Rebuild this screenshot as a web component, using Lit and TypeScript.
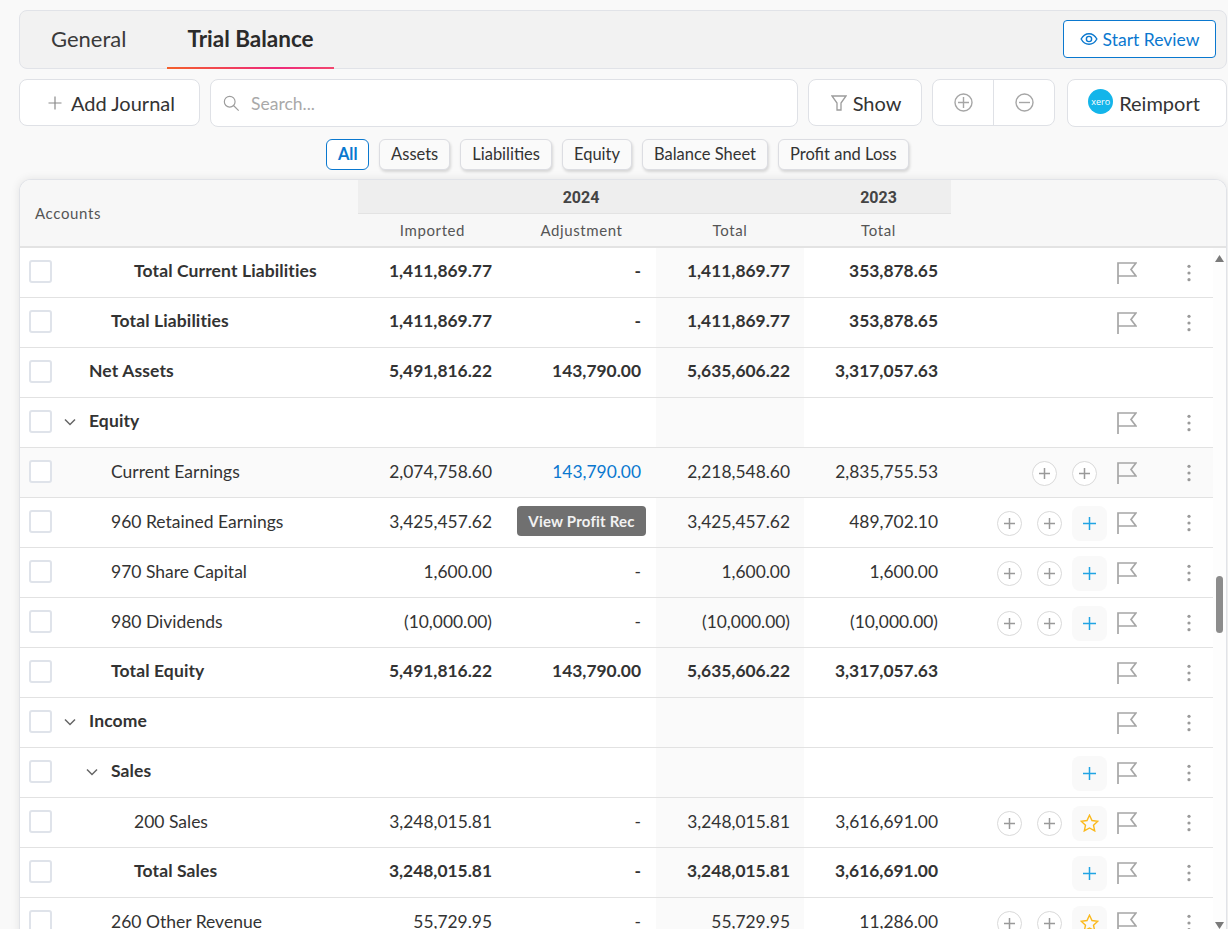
import { LitElement, html, css, svg, nothing } from "lit";
import { customElement } from "lit/decorators.js";

type Row = {
  label: string;
  level: 0 | 1 | 2;
  bold?: boolean;
  chevron?: boolean;
  vals?: [string, string, string, string];
  acts?: string;
  shade?: boolean;
  link?: boolean;
  tip?: boolean;
};

const rows: Row[] = [
  { label: "Total Current Liabilities", level: 2, bold: true, vals: ["1,411,869.77", "-", "1,411,869.77", "353,878.65"], acts: "f" },
  { label: "Total Liabilities", level: 1, bold: true, vals: ["1,411,869.77", "-", "1,411,869.77", "353,878.65"], acts: "f" },
  { label: "Net Assets", level: 0, bold: true, vals: ["5,491,816.22", "143,790.00", "5,635,606.22", "3,317,057.63"], acts: "" },
  { label: "Equity", level: 0, bold: true, chevron: true, acts: "f" },
  { label: "Current Earnings", level: 1, vals: ["2,074,758.60", "143,790.00", "2,218,548.60", "2,835,755.53"], acts: "ccf", shade: true, link: true },
  { label: "960 Retained Earnings", level: 1, vals: ["3,425,457.62", "-", "3,425,457.62", "489,702.10"], acts: "ccpf", tip: true },
  { label: "970 Share Capital", level: 1, vals: ["1,600.00", "-", "1,600.00", "1,600.00"], acts: "ccpf" },
  { label: "980 Dividends", level: 1, vals: ["(10,000.00)", "-", "(10,000.00)", "(10,000.00)"], acts: "ccpf" },
  { label: "Total Equity", level: 1, bold: true, vals: ["5,491,816.22", "143,790.00", "5,635,606.22", "3,317,057.63"], acts: "f" },
  { label: "Income", level: 0, bold: true, chevron: true, acts: "f" },
  { label: "Sales", level: 1, bold: true, chevron: true, acts: "pf" },
  { label: "200 Sales", level: 2, vals: ["3,248,015.81", "-", "3,248,015.81", "3,616,691.00"], acts: "ccsf" },
  { label: "Total Sales", level: 2, bold: true, vals: ["3,248,015.81", "-", "3,248,015.81", "3,616,691.00"], acts: "pf" },
  { label: "260 Other Revenue", level: 1, vals: ["55,729.95", "-", "55,729.95", "11,286.00"], acts: "ccsf" },
];

const plusIcon = svg`<path d="M12.5 7v11M7 12.5h11" fill="none" stroke="#999" stroke-width="1.5"/>`;

@customElement("app-root")
export class AppRoot extends LitElement {
  static styles = css`
    :host {
      display: block;
      height: 929px;
      overflow: hidden;
      background: #f9f9f9;
      font-family: Lato, "Open Sans", sans-serif;
      color: #333;
    }
    .page {
      display: flex;
      flex-direction: column;
      padding: 10px 1px 0 19px;
    }
    .tabs {
      height: 59px;
      box-sizing: border-box;
      border: 1px solid #e1e3e8;
      border-radius: 8px;
      background: #f2f2f2;
      display: flex;
      align-items: stretch;
      padding-left: 11px;
      gap: 21px;
    }
    .tab {
      display: flex;
      align-items: center;
      justify-content: center;
      font-size: 22px;
      padding: 0 20px 2px;
      color: #3a3a3a;
    }
    .tab.on {
      font-weight: 700;
      font-size: 22.5px;
      color: #2b2b2b;
      position: relative;
    }
    .tab.on::after {
      content: "";
      position: absolute;
      left: 0;
      right: 0;
      bottom: -1px;
      height: 2px;
      background: linear-gradient(90deg, #f4602a, #ee2a7b 65%, #f2476f);
    }
    .review {
      margin: 9px 10px 10px auto;
      width: 153px;
      box-sizing: border-box;
      border: 1px solid #0a78cf;
      border-radius: 4px;
      background: #fff;
      color: #0a78cf;
      font-size: 17.5px;
      display: flex;
      align-items: center;
      justify-content: center;
      gap: 5px;
    }
    .toolbar {
      display: flex;
      gap: 10px;
      margin-top: 10px;
      height: 48px;
    }
    .box {
      box-sizing: border-box;
      border: 1px solid #dfe1e6;
      border-radius: 8px;
      background: #fff;
      display: flex;
      align-items: center;
      justify-content: center;
      font-size: 20px;
      color: #333;
    }
    .add { width: 181px; gap: 9px; height: 47px; padding-left: 4px; }
    .search {
      width: 588px;
      justify-content: flex-start;
      padding-left: 12px;
      gap: 11px;
      color: #a9a9a9;
      font-size: 17.5px;
    }
    .show { width: 114px; gap: 6px; height: 47px; padding-left: 2px; }
    .zoom { width: 123px; height: 47px; align-items: stretch; }
    .zoom span { flex: 1; display: flex; align-items: center; justify-content: center; }
    .zoom span + span { border-left: 1px solid #dfe1e6; }
    .reimport { width: 160px; margin-left: 2px; gap: 6px; padding: 0 6px 1px 0; }
    .xero {
      width: 25px;
      height: 25px;
      border-radius: 50%;
      background: #13b5ea;
      color: #fff;
      font-size: 9px;
      line-height: 25px;
      text-align: center;
      font-family: "Open Sans", sans-serif;
      margin-bottom: 3px;
    }
    .chips {
      display: flex;
      justify-content: center;
      gap: 10px;
      margin-top: 12px;
      padding-right: 11px;
      height: 31px;
    }
    .chip {
      box-sizing: border-box;
      border: 1px solid #dcdde2;
      border-radius: 6px;
      background: #fafafa;
      box-shadow: 1px 2px 3px rgba(0, 0, 0, 0.14);
      font-size: 16.5px;
      padding: 0 11px 2px;
      display: flex;
      align-items: center;
      color: #333;
    }
    .chip.on {
      border-color: #0a78cf;
      color: #0a78cf;
      font-weight: 700;
      background: #fff;
      box-shadow: none;
      padding: 0 10.5px 2px;
    }
    .card {
      margin-top: 9px;
      border: 1px solid #e1e3e8;
      border-bottom: 0;
      border-radius: 12px 12px 0 0;
      background: #fff;
      box-shadow: 0 0 10px rgba(0, 0, 0, 0.09);
      overflow: hidden;
    }
    .head {
      display: grid;
      grid-template-columns: 338px 149px 149px 148px 147px 1fr;
      grid-template-rows: 34px 32px;
      height: 66px;
      background: #f7f7f7;
      border-bottom: 2px solid #e3e3e3;
      font-size: 15px;
      color: #555;
    }
    .accounts {
      grid-row: 1 / span 2;
      align-self: center;
      padding: 0 0 1px 15px;
      letter-spacing: 0.65px;
    }
    .year {
      background: #eeeeee;
      border-bottom: 1px solid #e3e3e3;
      display: flex;
      align-items: center;
      justify-content: center;
      padding-top: 1px;
      font-family: "Roboto", sans-serif;
      font-size: 16px;
      font-weight: 700;
      color: #444;
    }
    .y24 { grid-column: 2 / span 3; }
    .y23 { grid-column: 5; padding-left: 2px; }
    .sub {
      display: flex;
      align-items: center;
      justify-content: center;
      letter-spacing: 0.6px;
      padding-bottom: 1px;
    }
    .sub.c2 { grid-column: 2; }
    .sub.last { padding-left: 2px; }
    .body { display: flex; }
    .rows { flex: 1; min-width: 0; }
    .row {
      display: grid;
      grid-template-columns: 338px 149px 149px 148px 148px 1fr;
      height: 50px;
      box-sizing: border-box;
      border-bottom: 1px solid #e2e2e2;
      font-size: 17.4px;
      align-items: stretch;
    }
    .row.shade { background: #fafafa; }
    .row.bold { font-weight: 700; }
    .name { display: flex; align-items: center; padding: 0 0 2px 9px; }
    .check {
      width: 23px;
      height: 23px;
      box-sizing: border-box;
      border: 2px solid #dfe3ea;
      border-radius: 3px;
      background: #fff;
      flex: none;
    }
    .label {
      white-space: nowrap;
      font-size: 17.5px;
    }
    .bold .label { letter-spacing: 0.12px; padding-bottom: 2px; }
    .l0 .label { margin-left: 37px; }
    .l1 .label { margin-left: 59px; }
    .l2 .label { margin-left: 82px; }
    .chev { flex: none; width: 12px; height: 8px; }
    .l0 .chev { margin-left: 12px; margin-right: 13px; }
    .l1 .chev { margin-left: 34px; margin-right: 13px; }
    .l0 .chev + .label, .l1 .chev + .label { margin-left: 0; }
    .num {
      display: flex;
      align-items: center;
      justify-content: flex-end;
      padding: 0 15px 2px 0;
      position: relative;
    }
    .bold .num { padding-bottom: 4px; }
    .num.t { background: #fafafa; padding-right: 14px; }
    .num.t2 { padding-right: 14px; }
    .link { color: #0a78cf; }
    .tip {
      position: absolute;
      left: 10px;
      top: 8px;
      width: 129px;
      height: 30px;
      box-sizing: border-box;
      border-radius: 4px;
      background: #707070;
      color: #f2f2f2;
      font-size: 15px;
      font-weight: 700;
      display: flex;
      align-items: center;
      justify-content: center;
      letter-spacing: 0.2px;
    }
    .acts {
      display: flex;
      align-items: center;
      justify-content: flex-end;
      gap: 15px;
      padding-top: 1px;
    }
    .ic { flex: none; display: block; }
    .circ { width: 25px; height: 25px; }
    .pbox {
      flex: none;
      width: 35px;
      height: 35px;
      border-radius: 8px;
      background: #f9f9f9;
      margin: 0 -10px 0 -5px;
      display: flex;
      align-items: center;
      justify-content: center;
    }
    .flag { width: 20px; height: 22px; margin-left: 5px; margin-bottom: 1px; }
    .dots { width: 48px; height: 20px; margin-left: 13px; }
    .sb {
      flex: none;
      width: 13px;
      height: 682px;
      background: #fdfdfd;
      display: flex;
      flex-direction: column;
      align-items: center;
    }
    .arrow { margin-top: 7px; }
    .thumb {
      width: 7px;
      height: 57px;
      border-radius: 4px;
      background: #8c8c8c;
      margin-top: 314px;
    }
    .arrow.down { margin-top: 289px; }
  `;

  private circle() {
    return html`<svg class="ic circ" viewBox="0 0 25 25">
      <circle cx="12.5" cy="12.5" r="12" fill="#fff" stroke="#d9d9d9" />
      ${plusIcon}
    </svg>`;
  }

  private action(a: string) {
    switch (a) {
      case "c":
        return this.circle();
      case "p":
        return html`<span class="pbox"><svg class="ic" width="13" height="13" viewBox="0 0 13 13">
          <path d="M6.5 0v13M0 6.500h13" fill="none" stroke="#20a4e4" stroke-width="1.5" />
        </svg></span>`;
      case "s":
        return html`<span class="pbox"><svg class="ic" width="19" height="18" viewBox="0 0 19 18">
          <path d="M9.500 1.200l2.500 5.300 5.800.7-4.300 4 1.200 5.700-5.200-2.900-5.200 2.900 1.200-5.700-4.300-4 5.800-.7z" fill="none" stroke="#fbb91b" stroke-width="1.400" stroke-linejoin="miter" />
        </svg></span>`;
      default:
        return html`<svg class="ic flag" viewBox="0 0 20 22">
          <path d="M1 22V1h18l-5 6.500 5 6.500H1" fill="none" stroke="#a6a6a6" stroke-width="1.700" />
        </svg>`;
    }
  }

  private renderRow(r: Row) {
    const rowCls = `row l${r.level}${r.bold ? " bold" : ""}${r.shade ? " shade" : ""}`;
    return html`<div class=${rowCls}>
      <div class="name">
        <span class="check"></span>
        ${r.chevron
          ? html`<svg class="chev" viewBox="0 0 12 8"><path d="M1 1.500l5 5 5-5" fill="none" stroke="#666" stroke-width="1.500" /></svg>`
          : nothing}
        <span class="label">${r.label}</span>
      </div>
      <div class="num">${r.vals?.[0]}</div>
      <div class="num">
        <span class=${r.link ? "link" : ""}>${r.vals?.[1]}</span>
        ${r.tip ? html`<span class="tip">View Profit Rec</span>` : nothing}
      </div>
      <div class="num t">${r.vals?.[2]}</div>
      <div class="num t2">${r.vals?.[3]}</div>
      <div class="acts">
        ${(r.acts ?? "").split("").map((a) => this.action(a))}
        ${r.acts
          ? html`<svg class="ic dots" viewBox="0 0 48 20"><g fill="#9a9a9a"><circle cx="24" cy="3.300" r="1.600" /><circle cx="24" cy="10" r="1.600" /><circle cx="24" cy="16.700" r="1.600" /></g></svg>`
          : nothing}
      </div>
    </div>`;
  }

  render() {
    return html`<div class="page">
      <div class="tabs">
        <div class="tab">General</div>
        <div class="tab on">Trial Balance</div>
        <div class="review">
          <svg width="18" height="14" viewBox="0 0 20 16">
            <path d="M1 8c2.200-4 5.200-6 9-6s6.800 2 9 6c-2.200 4-5.200 6-9 6s-6.800-2-9-6z" fill="none" stroke="#0a78cf" stroke-width="1.600" />
            <circle cx="10" cy="8" r="3" fill="none" stroke="#0a78cf" stroke-width="1.600" />
          </svg>
          Start Review
        </div>
      </div>
      <div class="toolbar">
        <div class="box add">
          <svg width="14" height="14" viewBox="0 0 14 14"><path d="M7 .5v13M.5 7h13" stroke="#8a8a8a" stroke-width="1.200" fill="none" /></svg>
          Add Journal
        </div>
        <div class="box search">
          <svg width="17" height="17" viewBox="0 0 19 19"><circle cx="7.500" cy="7.500" r="6" fill="none" stroke="#9c9c9c" stroke-width="1.300" /><path d="M12 12l5.500 5.500" stroke="#9c9c9c" stroke-width="1.300" /></svg>
          Search...
        </div>
        <div class="box show">
          <svg width="16" height="16" viewBox="0 0 16 16"><path d="M1 1h14l-5 7v7H6V8z" fill="none" stroke="#9c9c9c" stroke-width="1.300" /></svg>
          Show
        </div>
        <div class="box zoom">
          <span><svg width="19" height="19" viewBox="0 0 19 19"><circle cx="9.500" cy="9.500" r="8.500" fill="none" stroke="#a6a6a6" stroke-width="1.400" /><path d="M9.500 4v11M4 9.500h11" stroke="#a6a6a6" stroke-width="1.400" /></svg></span>
          <span><svg width="19" height="19" viewBox="0 0 19 19"><circle cx="9.500" cy="9.500" r="8.500" fill="none" stroke="#a6a6a6" stroke-width="1.400" /><path d="M4 9.500h11" stroke="#a6a6a6" stroke-width="1.400" /></svg></span>
        </div>
        <div class="box reimport"><span class="xero">xero</span>Reimport</div>
      </div>
      <div class="chips">
        <div class="chip on">All</div>
        <div class="chip">Assets</div>
        <div class="chip">Liabilities</div>
        <div class="chip">Equity</div>
        <div class="chip">Balance Sheet</div>
        <div class="chip">Profit and Loss</div>
      </div>
      <div class="card">
        <div class="head">
          <div class="accounts">Accounts</div>
          <div class="year y24">2024</div>
          <div class="year y23">2023</div>
          <div class="sub c2">Imported</div>
          <div class="sub">Adjustment</div>
          <div class="sub">Total</div>
          <div class="sub last">Total</div>
        </div>
        <div class="body">
          <div class="rows">${rows.map((r) => this.renderRow(r))}</div>
          <div class="sb">
            <svg class="arrow" width="9" height="7" viewBox="0 0 9 7"><path d="M4.500 0L9 7H0z" fill="#7a7a7a" /></svg>
            <div class="thumb"></div>
            <svg class="arrow down" width="9" height="7" viewBox="0 0 9 7"><path d="M0 0h9L4.500 7z" fill="#7a7a7a" /></svg>
          </div>
        </div>
      </div>
    </div>`;
  }
}
